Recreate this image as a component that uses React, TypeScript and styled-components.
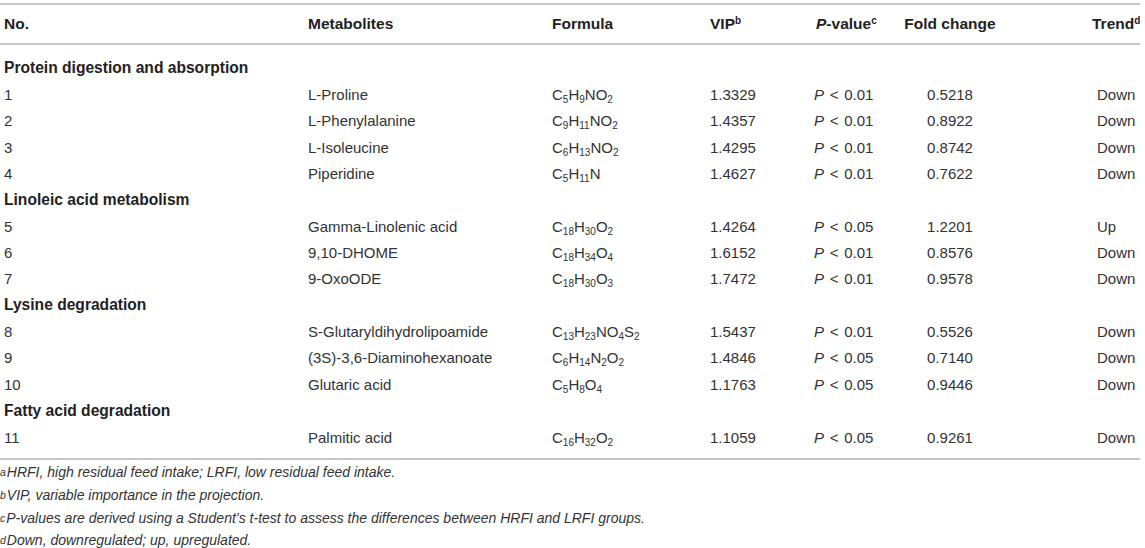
import React from "react";
import styled, { createGlobalStyle } from "styled-components";

const Global = createGlobalStyle`
  html, body { margin: 0; padding: 0; background: #ffffff; }
  body { font-family: "Liberation Sans", Arial, Helvetica, sans-serif; color: #333; }
`;

const Wrap = styled.div`
  width: 1140px;
  font-size: 15px;
`;

const COLS = "304px 244px 158px 104px 80px 120px 130px";

const Head = styled.div`
  display: grid;
  grid-template-columns: ${COLS};
  border-top: 2px solid #c6c6c6;
  border-bottom: 2px solid #c6c6c6;
  margin-top: 3px;
  height: 38px;
  align-items: center;
  font-weight: bold;
  font-size: 15.5px;
  color: #222;
`;

const Body = styled.div`
  padding: 9.8px 0 7.8px;
  border-bottom: 2px solid #c6c6c6;
`;

const Row = styled.div`
  display: grid;
  grid-template-columns: ${COLS};
  height: 26.36px;
  align-items: center;
  white-space: nowrap;
`;

const Section = styled.div`
  height: 26.36px;
  display: flex;
  align-items: center;
  padding-left: 4px;
  font-weight: bold;
  font-size: 15.6px;
  color: #222;
`;

const Cell = styled.div<{ $align?: "left" | "center"; $pad?: number }>`
  text-align: ${(p) => p.$align ?? "left"};
  padding-left: ${(p) => (p.$align === "center" ? 0 : p.$pad ?? 4)}px;
  white-space: nowrap;
`;

const Sup = styled.sup`
  font-size: 10px;
  line-height: 0;
  vertical-align: 5px;
`;

const Sub = styled.sub`
  font-size: 10px;
  line-height: 0;
  vertical-align: -3px;
`;

const It = styled.i`
  font-style: italic;
`;

const Rel = styled.span`
  margin: 0 1.5px;
`;

const Notes = styled.div`
  padding-top: 1px;
  font-size: 14px;
  font-style: italic;
  color: #333;
`;

const Note = styled.div`
  height: 22.7px;
  display: flex;
  align-items: center;
  white-space: nowrap;
`;

const NoteSup = styled.sup`
  font-size: 10.5px;
  line-height: 0;
  vertical-align: 5px;
  margin-right: 1px;
`;

type Item = { n: string; name: string; f: React.ReactNode; vip: string; p: string; fc: string; t: string };
type Group = { title: string; items: Item[] };

const F = (parts: (string | [string])[]) => (
  <>
    {parts.map((x, i) => (typeof x === "string" ? <span key={i}>{x}</span> : <Sub key={i}>{x[0]}</Sub>))}
  </>
);

const groups: Group[] = [
  {
    title: "Protein digestion and absorption",
    items: [
      { n: "1", name: "L-Proline", f: F(["C", ["5"], "H", ["9"], "NO", ["2"]]), vip: "1.3329", p: "0.01", fc: "0.5218", t: "Down" },
      { n: "2", name: "L-Phenylalanine", f: F(["C", ["9"], "H", ["11"], "NO", ["2"]]), vip: "1.4357", p: "0.01", fc: "0.8922", t: "Down" },
      { n: "3", name: "L-Isoleucine", f: F(["C", ["6"], "H", ["13"], "NO", ["2"]]), vip: "1.4295", p: "0.01", fc: "0.8742", t: "Down" },
      { n: "4", name: "Piperidine", f: F(["C", ["5"], "H", ["11"], "N"]), vip: "1.4627", p: "0.01", fc: "0.7622", t: "Down" },
    ],
  },
  {
    title: "Linoleic acid metabolism",
    items: [
      { n: "5", name: "Gamma-Linolenic acid", f: F(["C", ["18"], "H", ["30"], "O", ["2"]]), vip: "1.4264", p: "0.05", fc: "1.2201", t: "Up" },
      { n: "6", name: "9,10-DHOME", f: F(["C", ["18"], "H", ["34"], "O", ["4"]]), vip: "1.6152", p: "0.01", fc: "0.8576", t: "Down" },
      { n: "7", name: "9-OxoODE", f: F(["C", ["18"], "H", ["30"], "O", ["3"]]), vip: "1.7472", p: "0.01", fc: "0.9578", t: "Down" },
    ],
  },
  {
    title: "Lysine degradation",
    items: [
      { n: "8", name: "S-Glutaryldihydrolipoamide", f: F(["C", ["13"], "H", ["23"], "NO", ["4"], "S", ["2"]]), vip: "1.5437", p: "0.01", fc: "0.5526", t: "Down" },
      { n: "9", name: "(3S)-3,6-Diaminohexanoate", f: F(["C", ["6"], "H", ["14"], "N", ["2"], "O", ["2"]]), vip: "1.4846", p: "0.05", fc: "0.7140", t: "Down" },
      { n: "10", name: "Glutaric acid", f: F(["C", ["5"], "H", ["8"], "O", ["4"]]), vip: "1.1763", p: "0.05", fc: "0.9446", t: "Down" },
    ],
  },
  {
    title: "Fatty acid degradation",
    items: [
      { n: "11", name: "Palmitic acid", f: F(["C", ["16"], "H", ["32"], "O", ["2"]]), vip: "1.1059", p: "0.05", fc: "0.9261", t: "Down" },
    ],
  },
];

export default function App() {
  return (
    <>
      <Global />
      <Wrap>
        <Head>
          <Cell>No.</Cell>
          <Cell>Metabolites</Cell>
          <Cell>Formula</Cell>
          <Cell $pad={4}>
            VIP<Sup>b</Sup>
          </Cell>
          <Cell $pad={6}>
            <It>P</It>-value<Sup>c</Sup>
          </Cell>
          <Cell $align="center">Fold change</Cell>
          <Cell $pad={82}>
            Trend<Sup>d</Sup>
          </Cell>
        </Head>
        <Body>
          {groups.map((g) => (
            <React.Fragment key={g.title}>
              <Section>{g.title}</Section>
              {g.items.map((it) => (
                <Row key={it.n}>
                  <Cell>{it.n}</Cell>
                  <Cell>{it.name}</Cell>
                  <Cell>{it.f}</Cell>
                  <Cell $pad={4}>{it.vip}</Cell>
                  <Cell $pad={4}>
                    <It>P</It> <Rel>&lt;</Rel> {it.p}
                  </Cell>
                  <Cell $align="center">{it.fc}</Cell>
                  <Cell $pad={87}>{it.t}</Cell>
                </Row>
              ))}
            </React.Fragment>
          ))}
        </Body>
        <Notes>
          <Note>
            <NoteSup>a</NoteSup>HRFI, high residual feed intake; LRFI, low residual feed intake.
          </Note>
          <Note>
            <NoteSup>b</NoteSup>VIP, variable importance in the projection.
          </Note>
          <Note>
            <NoteSup>c</NoteSup>P-values are derived using a Student’s t-test to assess the differences between HRFI and LRFI groups.
          </Note>
          <Note>
            <NoteSup>d</NoteSup>Down, downregulated; up, upregulated.
          </Note>
        </Notes>
      </Wrap>
    </>
  );
}
